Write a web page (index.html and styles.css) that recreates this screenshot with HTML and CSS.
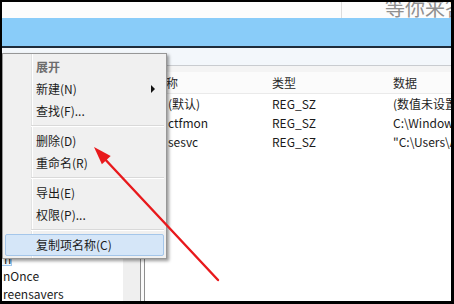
FILE: index.html
```html
<!DOCTYPE html>
<html>
<head>
<meta charset="utf-8">
<link rel="stylesheet" href="styles.css">
</head>
<body>
<div class="frame">
  <div class="titlestrip">
    <div class="tsplit"></div>
    <span class="watermark">等你来答</span>
  </div>
  <div class="bluebar"></div>
  <div class="darkline"></div>
  <div class="addr"></div>
  <div class="gapband"></div>
  <div class="main">
    <div class="tree">
      <div class="titem sel">n</div>
      <div class="titem">nOnce</div>
      <div class="titem">reensavers</div>
    </div>
    <div class="vscroll"></div>
    <div class="splitter"></div>
    <div class="list">
      <div class="lrow lhead">
        <span class="c1">名称</span><span class="c2">类型</span><span class="c3">数据</span>
      </div>
      <div class="lrow">
        <span class="c1"><i class="ico"></i>(默认)</span><span class="c2">REG_SZ</span><span class="c3">(数值未设置)</span>
      </div>
      <div class="lrow">
        <span class="c1"><i class="ico"></i>ctfmon</span><span class="c2">REG_SZ</span><span class="c3">C:\Windows\system32\ctfmon.exe</span>
      </div>
      <div class="lrow">
        <span class="c1"><i class="ico"></i>sesvc</span><span class="c2">REG_SZ</span><span class="c3">"C:\Users\Administrator\AppData"</span>
      </div>
    </div>
  </div>

  <div class="menu">
    <div class="mi def">展开</div>
    <div class="mi">新建(N)<span class="sub"></span></div>
    <div class="mi">查找(F)...</div>
    <div class="msep"></div>
    <div class="mi">删除(D)</div>
    <div class="mi">重命名(R)</div>
    <div class="msep"></div>
    <div class="mi">导出(E)</div>
    <div class="mi">权限(P)...</div>
    <div class="msep"></div>
    <div class="mi hot">复制项名称(C)</div>
  </div>

  <svg class="arrow" width="449" height="299" viewBox="0 0 449 299">
    <line x1="216" y1="278" x2="100" y2="154" stroke="#e8191c" stroke-width="2.4" stroke-linecap="round"/>
    <polygon points="92,145 99.9,162.3 108.7,154.1" fill="#e8191c"/>
  </svg>
</div>
</body>
</html>
```

FILE: styles.css
```css
html, body {
  margin: 0;
  padding: 0;
  background: #000;
}
.frame {
  position: relative;
  width: 454px;
  height: 304px;
  box-sizing: border-box;
  border: 2px solid #000;
  border-right-width: 3px;
  border-bottom-width: 3px;
  background: #fff;
  overflow: hidden;
  display: flex;
  flex-direction: column;
  font-family: "Noto Sans CJK SC", "Noto Sans", sans-serif;
  font-size: 12px;
  color: #1b1b1b;
}
.titlestrip {
  height: 16px;
  flex: none;
  display: flex;
  background: #fcfcfc;
  overflow: hidden;
}
.tsplit {
  width: 339px;
  flex: none;
  border-right: 1px solid #dcdcdc;
}
.watermark {
  margin-left: auto;
  margin-right: -14px;
  margin-top: -4px;
  font-size: 20px;
  line-height: 20px;
  color: #8f8f8f;
  white-space: nowrap;
}
.bluebar {
  height: 28px;
  flex: none;
  background: #89ccf9;
}
.darkline {
  height: 2px;
  flex: none;
  background: #1f2d3b;
}
.addr {
  height: 17px;
  flex: none;
  background: #f3f7fb;
  border-bottom: 1px solid #c9ccd0;
}
.gapband {
  height: 6px;
  flex: none;
  background: #f4f4f4;
}
.main {
  flex: 1;
  display: flex;
  min-height: 0;
}
.tree {
  width: 121px;
  flex: none;
  background: #fff;
  padding-top: 177px;
  box-sizing: border-box;
  overflow: hidden;
}
.titem {
  height: 18px;
  line-height: 18px;
  padding-left: 1px;
  white-space: nowrap;
  color: #1b1b1b;
}
.titem.sel {
  display: inline-block;
  width: 12px;
  height: 16px;
  line-height: 16px;
  margin: 1px 0 1px -2px;
  padding-left: 3px;
  box-sizing: border-box;
  border: 1px solid #9fc7ec;
  background: #eef6fd;
  vertical-align: top;
}
.vscroll {
  width: 17px;
  flex: none;
  background: #efefef;
  border-right: 1px solid #8e8e8e;
}
.splitter {
  width: 3px;
  flex: none;
  background: #fafafa;
  border-right: 1px solid #8e8e8e;
}
.list {
  flex: 1;
  background: #fff;
  overflow: hidden;
}
.lrow {
  display: grid;
  grid-template-columns: 122px 121px 1fr;
  height: 19px;
  line-height: 19px;
  white-space: nowrap;
}
.lhead {
  height: 22px;
  line-height: 20px;
  background: #fbfbfb;
  border-bottom: 1px solid #eaeaea;
  box-sizing: border-box;
  color: #2a2a2a;
}
.lhead .c1 {
  padding-left: 9px;
}
.c1, .c2, .c3 {
  padding-left: 5px;
  overflow: hidden;
  display: flex;
  align-items: center;
}
.ico {
  width: 14px;
  height: 12px;
  margin-right: 4px;
  flex: none;
  background: #c33;
}
.menu {
  position: absolute;
  left: 0;
  top: 51px;
  width: 165px;
  box-sizing: border-box;
  border: 1px solid #979797;
  padding: 2px;
  background-color: #f0f0f0;
  background-image: linear-gradient(to right, transparent 28px, #e2e3e3 28px, #e2e3e3 29px, #fff 29px, #fff 30px, transparent 30px);
  box-shadow: 2px 2px 3px rgba(0, 0, 0, 0.4);
  font-size: 12px;
}
.mi {
  height: 22px;
  line-height: 22px;
  padding-left: 31px;
  display: flex;
  align-items: center;
  box-sizing: border-box;
  color: #1b1b1b;
  white-space: nowrap;
}
.mi.def {
  font-weight: bold;
  color: #6d6d6d;
}
.mi.hot {
  border: 1px solid #a4c6ea;
  border-radius: 2px;
  background: #d5e6f8;
  padding-left: 30px;
}
.sub {
  margin-left: auto;
  margin-right: 9px;
  width: 0;
  height: 0;
  border-left: 4px solid #111;
  border-top: 4px solid transparent;
  border-bottom: 4px solid transparent;
}
.msep {
  height: 0;
  margin: 3px 0 3px 26px;
  border-top: 1px solid #d9d9d9;
  border-bottom: 1px solid #fff;
}
.arrow {
  position: absolute;
  left: 0;
  top: 0;
  pointer-events: none;
}
```
